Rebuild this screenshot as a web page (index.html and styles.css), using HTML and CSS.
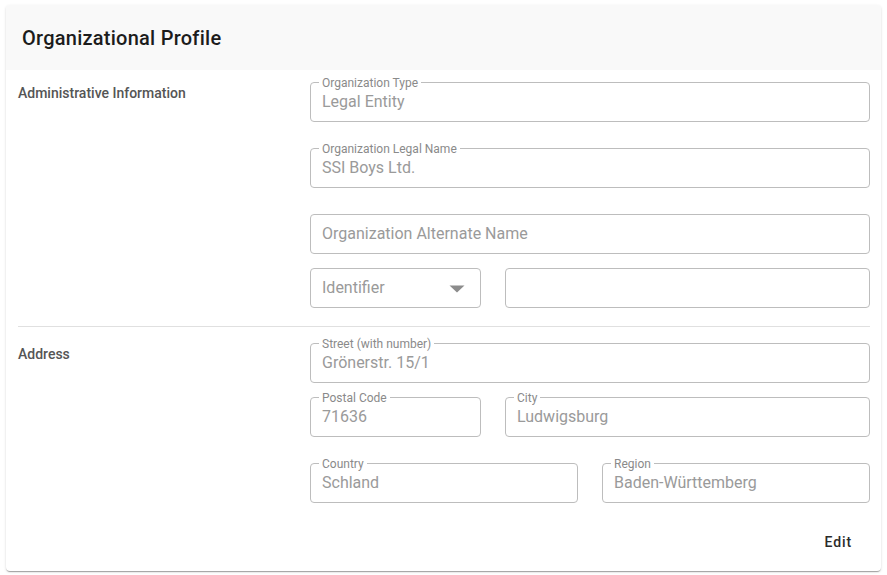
FILE: index.html
```html
<!DOCTYPE html>
<html lang="en">
<head>
<meta charset="utf-8">
<title>Organizational Profile</title>
<link rel="stylesheet" href="styles.css">
</head>
<body>
<div class="card">
  <div class="card-header">
    <h2 class="card-title">Organizational Profile</h2>
  </div>
  <div class="card-content">
    <div class="section">
      <div class="section-label">Administrative Information</div>
      <div class="fields">
        <div class="field gap-lg">
          <span class="field-label">Organization Type</span>
          <div class="field-value">Legal Entity</div>
        </div>
        <div class="field gap-lg">
          <span class="field-label">Organization Legal Name</span>
          <div class="field-value">SSI Boys Ltd.</div>
        </div>
        <div class="field gap-sm">
          <div class="field-value">Organization Alternate Name</div>
        </div>
        <div class="row row-narrow">
          <div class="field select">
            <div class="field-value">Identifier</div>
            <svg class="arrow" width="16" height="8" viewBox="0 0 16 8"><polygon points="0.5,0.5 15.5,0.5 8,7.5" fill="#8c8c8c"/></svg>
          </div>
          <div class="field">
            <div class="field-value"></div>
          </div>
        </div>
      </div>
    </div>
    <hr class="divider">
    <div class="section">
      <div class="section-label">Address</div>
      <div class="fields">
        <div class="field gap-sm">
          <span class="field-label">Street (with number)</span>
          <div class="field-value">Grönerstr. 15/1</div>
        </div>
        <div class="row row-narrow gap-lg">
          <div class="field">
            <span class="field-label">Postal Code</span>
            <div class="field-value">71636</div>
          </div>
          <div class="field">
            <span class="field-label">City</span>
            <div class="field-value">Ludwigsburg</div>
          </div>
        </div>
        <div class="row row-half">
          <div class="field">
            <span class="field-label">Country</span>
            <div class="field-value">Schland</div>
          </div>
          <div class="field">
            <span class="field-label">Region</span>
            <div class="field-value">Baden-Württemberg</div>
          </div>
        </div>
      </div>
    </div>
  </div>
  <div class="card-actions">
    <button class="btn" type="button">Edit</button>
  </div>
</div>
</body>
</html>
```

FILE: styles.css
```css
* { box-sizing: border-box; }

html, body {
  margin: 0;
  background: #ffffff;
}

body {
  padding: 5px 6px 4px 6px;
  font-family: Roboto, "Liberation Sans", Arial, sans-serif;
}

.card {
  background: #fff;
  border-radius: 4px;
  box-shadow: 0 2px 1px -1px rgba(0,0,0,0.2), 0 1px 1px 0 rgba(0,0,0,0.14), 0 1px 3px 0 rgba(0,0,0,0.12);
  height: 566px;
  display: flex;
  flex-direction: column;
  overflow: hidden;
}

.card-header {
  background: #f9f9f9;
  height: 65px;
  padding: 0 16px;
  display: flex;
  align-items: center;
}

.card-title {
  margin: 0;
  font-size: 20px;
  font-weight: 500;
  color: #1c1c1c;
  line-height: 24px;
  letter-spacing: 0.25px;
}

.card-content {
  padding: 12px 11px 0 12px;
}

.section {
  display: grid;
  grid-template-columns: 292px 1fr;
}

.section-label {
  font-size: 14px;
  font-weight: 500;
  color: #555555;
  line-height: 20px;
  padding-top: 1px;
}

.fields {
  display: flex;
  flex-direction: column;
}

.field {
  position: relative;
  height: 40px;
  border: 1px solid #bdbdbd;
  border-radius: 4px;
}

.gap-lg { margin-bottom: 26px; }
.gap-sm { margin-bottom: 14px; }

.field-label {
  position: absolute;
  top: -7px;
  left: 8px;
  padding: 0 3px;
  background: #fff;
  font-size: 12px;
  line-height: 14px;
  color: #8a8a8a;
}

.field-value {
  padding: 0 11px;
  font-size: 16px;
  line-height: 38px;
  height: 38px;
  color: #9a9a9a;
  white-space: nowrap;
}

.select .arrow {
  position: absolute;
  right: 15px;
  top: 16px;
}

.row {
  display: grid;
  column-gap: 24px;
}

.row-narrow { grid-template-columns: 171px 1fr; }
.row-half { grid-template-columns: 1fr 1fr; }

.row .field { margin-bottom: 0; }

.divider {
  margin: 18px 0 16px 0;
  border: 0;
  border-top: 1px solid #e0e0e0;
  height: 0;
}

.card-actions {
  margin-top: auto;
  display: flex;
  justify-content: flex-end;
  padding: 0 21px 11px 0;
}

.btn {
  font-family: Roboto, "Liberation Sans", Arial, sans-serif;
  font-size: 14px;
  font-weight: 500;
  letter-spacing: 0.9px;
  color: #2b2b2b;
  background: transparent;
  border: 0;
  padding: 0 8px;
  height: 36px;
  line-height: 36px;
  border-radius: 4px;
}
```
